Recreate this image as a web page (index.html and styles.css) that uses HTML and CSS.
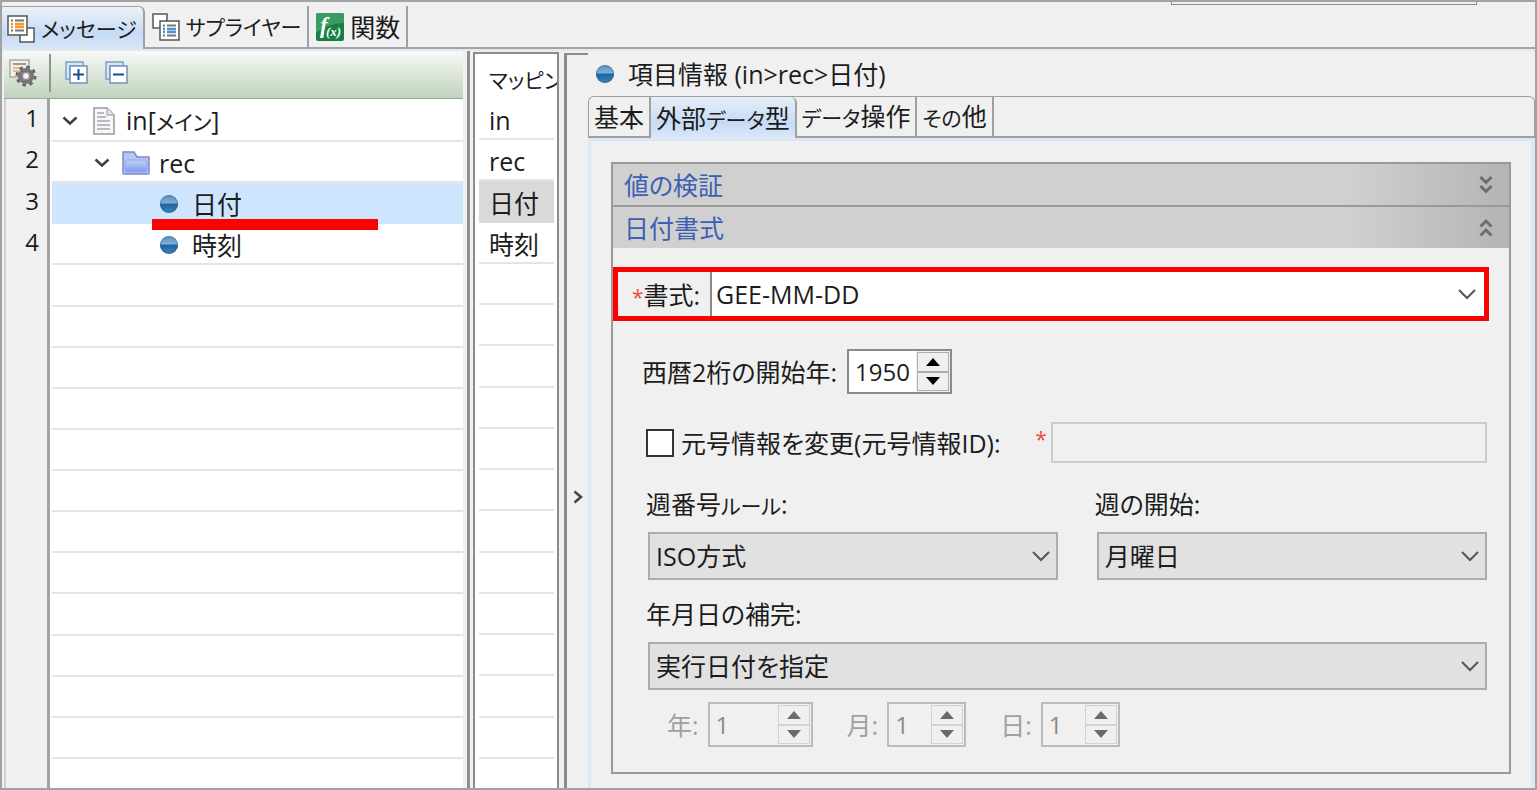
FILE: index.html
```html
<!DOCTYPE html>
<html lang="ja">
<head>
    <meta charset="UTF-8">
    <meta name="viewport" content="width=device-width, initial-scale=1.0">
    <title>項目情報</title>
    <link rel="stylesheet" href="styles.css">
</head>
<body>
    <div class="window">
        <!-- View tabs -->
        <div class="view-tabs">
            <button class="view-tab active">
                <svg width="28" height="28" viewBox="0 0 28 28">
                    <rect x="13" y="13" width="14" height="14" fill="#fff" stroke="#555" stroke-width="1.5"/>
                    <rect x="1" y="1" width="19" height="19" fill="#fff" stroke="#555" stroke-width="1.5"/>
                    <path d="M4 5.500h2M8 5.500h9M4 15.500h2M8 15.500h9" stroke="#777" stroke-width="2"/>
                    <path d="M4 9h2M8 9h9M4 12h2M8 12h9" stroke="#f09a2c" stroke-width="2.500"/>
                </svg>
                <span class="kana">メッセージ</span>
            </button>
            <button class="view-tab">
                <svg width="28" height="28" viewBox="0 0 28 28">
                    <rect x="1" y="1" width="14" height="14" fill="#fff" stroke="#555" stroke-width="1.5"/>
                    <rect x="8" y="8" width="19" height="19" fill="#fff" stroke="#555" stroke-width="1.5"/>
                    <path d="M11 12.500h2M15 12.500h9M11 22.500h2M15 22.500h9" stroke="#777" stroke-width="2"/>
                    <path d="M11 16h2M15 16h9M11 19h2M15 19h9" stroke="#4e93d2" stroke-width="2.500"/>
                </svg>
                <span class="kana">サプライヤー</span>
            </button>
            <button class="view-tab">
                <svg width="28" height="28" viewBox="0 0 28 28">
                    <rect width="28" height="28" rx="2" fill="#158045"/>
                    <path d="M0 2q0-2 2-2h24q2 0 2 2v8Q12 10 0 20z" fill="#3a9c62"/>
                    <text x="4" y="20" class="fx">f</text>
                    <text x="10" y="23" class="fx-arg">(x)</text>
                </svg>
                関数
            </button>
            <span class="search-edge"></span>
        </div>

        <div class="workspace">
            <!-- Message tree -->
            <section class="tree-pane">
                <div class="toolbar">
                    <button class="tool" aria-label="設定">
                        <svg width="28" height="28" viewBox="0 0 28 28">
                            <path d="M1 1h19v17H1z" fill="#f3f0ea" stroke="#aaa" stroke-width="1.500"/>
                            <path d="M4 5h13" stroke="#999" stroke-width="2"/>
                            <path d="M4 9h8M4 12h6" stroke="#e3bd7c" stroke-width="2"/>
                            <circle cx="17" cy="17" r="9" fill="none" stroke="#666" stroke-width="3" stroke-dasharray="3.500 3.568"/>
                            <circle cx="17" cy="17" r="6" fill="#ddd" stroke="#777" stroke-width="4"/>
                            <circle cx="17" cy="17" r="3.500" fill="#f4f4f4" stroke="#777"/>
                        </svg>
                    </button>
                    <span class="tool-line"></span>
                    <button class="tool" aria-label="すべて展開">
                        <svg width="24" height="24" viewBox="0 0 24 24">
                            <path d="M1 18V1h17v4H5v13z" fill="#d9e8f7" stroke="#7f9fc6" stroke-width="1.500"/>
                            <rect x="5" y="5" width="17" height="17" fill="#fff" stroke="#7191bb" stroke-width="1.500"/>
                            <path d="M8 13.500h11M13.500 8v11" stroke="#164f8a" stroke-width="2"/>
                        </svg>
                    </button>
                    <button class="tool" aria-label="すべて折りたたむ">
                        <svg width="24" height="24" viewBox="0 0 24 24">
                            <path d="M1 18V1h17v4H5v13z" fill="#d9e8f7" stroke="#7f9fc6" stroke-width="1.500"/>
                            <rect x="5" y="5" width="17" height="17" fill="#fff" stroke="#7191bb" stroke-width="1.500"/>
                            <path d="M8 13.500h11" stroke="#164f8a" stroke-width="2"/>
                        </svg>
                    </button>
                </div>
                <div class="tree-body">
                    <div class="gutter rows">
                        <div>1</div><div>2</div><div>3</div><div>4</div>
                        <div></div><div></div><div></div><div></div><div></div><div></div>
                        <div></div><div></div><div></div><div></div><div></div><div></div>
                        <div class="rest"></div>
                    </div>
                    <div class="tree rows">
                        <div class="node level-1">
                            <svg class="twisty" width="16" height="10" viewBox="0 0 16 10"><path d="M1.500 1.500L8 7.500l6.500-6" fill="none" stroke="#404040" stroke-width="2.500"/></svg>
                            <svg class="doc" width="22" height="28" viewBox="0 0 22 28">
                                <path d="M1 1h13l7 7v19H1z" fill="#f7f7f9" stroke="#999" stroke-width="1.500"/>
                                <path d="M14 1v7h7" fill="#e4e4e8" stroke="#999"/>
                                <path d="M4 6h7M4 10h9M4 14h13M4 18h13M4 22h13" stroke="#a5a5ad" stroke-width="1.500"/>
                            </svg>
                            <span>in[<span class="kana">メイン</span>]</span>
                        </div>
                        <div class="node level-2">
                            <svg class="twisty" width="16" height="10" viewBox="0 0 16 10"><path d="M1.500 1.500L8 7.500l6.500-6" fill="none" stroke="#404040" stroke-width="2.500"/></svg>
                            <svg class="folder" width="28" height="24" viewBox="0 0 28 24">
                                <defs>
                                    <linearGradient id="folderFill" x1="0" y1="0" x2="0" y2="1">
                                        <stop offset="0" stop-color="#c3d2fa"/>
                                        <stop offset="1" stop-color="#7d9ceb"/>
                                    </linearGradient>
                                </defs>
                                <path d="M1 22V1h11l3 5h12v16q0 1-1 1H2q-1 0-1-1z" fill="#b9c6f5" stroke="#8087c8" stroke-width="1.500"/>
                                <rect x="3" y="9" width="22" height="12" rx="2" fill="url(#folderFill)" stroke="#91a6ea"/>
                            </svg>
                            rec
                        </div>
                        <div class="node level-3 selected"><span class="ball"></span>日付<span class="mark"></span></div>
                        <div class="node level-3"><span class="ball"></span>時刻</div>
                        <div></div><div></div><div></div><div></div><div></div><div></div>
                        <div></div><div></div><div></div><div></div><div></div><div></div>
                        <div class="rest"></div>
                    </div>
                </div>
            </section>

            <!-- Mapping column -->
            <section class="map-pane">
                <div class="map-head"><span class="kana">マッピング</span></div>
                <div class="map rows">
                    <div>in</div>
                    <div>rec</div>
                    <div class="selected">日付</div>
                    <div>時刻</div>
                    <div></div><div></div><div></div><div></div><div></div><div></div>
                    <div></div><div></div><div></div><div></div><div></div><div></div>
                    <div class="rest"></div>
                </div>
            </section>

            <button class="sash" aria-label="開閉">
                <svg width="10" height="14" viewBox="0 0 10 14"><path d="M1.500 1.500L8 7l-6.500 5.500" fill="none" stroke="#444" stroke-width="2.500"/></svg>
            </button>

            <!-- Item details -->
            <section class="detail">
                <h1 class="detail-title"><span class="ball"></span>項目情報 (in&gt;rec&gt;日付)</h1>
                <div class="tabs">
                    <button class="tab">基本</button>
                    <button class="tab active">外部<span class="kana">データ</span>型</button>
                    <button class="tab"><span class="kana">データ</span>操作</button>
                    <button class="tab"><span class="kana">その</span>他</button>
                </div>
                <div class="tab-body">
                    <div class="group">
                        <button class="section">
                            値の検証
                            <svg width="14" height="20" viewBox="0 0 14 20"><path d="M1.500 2L7 7.500 12.500 2M1.500 11L7 16.500l5.500-5.500" fill="none" stroke="#6e6e6e" stroke-width="3"/></svg>
                        </button>
                        <button class="section">
                            日付書式
                            <svg width="14" height="20" viewBox="0 0 14 20"><path d="M1.500 8.500L7 3l5.500 5.500M1.500 17.500L7 12l5.500 5.500" fill="none" stroke="#6e6e6e" stroke-width="3"/></svg>
                        </button>

                        <div class="format-row">
                            <label for="format"><span class="required">*</span>書式:</label>
                            <div class="combo">
                                <select id="format" class="editable"><option>GEE-MM-DD</option></select>
                                <svg width="18" height="11" viewBox="0 0 18 11"><path d="M1 1l8 8 8-8" fill="none" stroke="#555" stroke-width="2"/></svg>
                            </div>
                        </div>

                        <div class="form">
                            <div class="line year-line">
                                <label for="startYear">西暦2桁の開始年:</label>
                                <div class="spinner">
                                    <input type="number" id="startYear" class="w-year" value="1950">
                                    <div class="steps">
                                        <button aria-label="増やす"><svg width="14" height="8" viewBox="0 0 14 8"><path d="M0 8l7-8 7 8z"/></svg></button>
                                        <button aria-label="減らす"><svg width="14" height="8" viewBox="0 0 14 8"><path d="M0 0l7 8 7-8z"/></svg></button>
                                    </div>
                                </div>
                            </div>

                            <div class="line era-line">
                                <input type="checkbox" id="era" class="check">
                                <label for="era">元号情報を変更(元号情報ID):</label>
                                <span class="required era-required">*</span>
                                <input type="text" class="era-id" aria-label="元号情報ID" disabled>
                            </div>

                            <div class="pair">
                                <div>
                                    <label class="caption" for="weekRule">週番号<span class="kana">ルール</span>:</label>
                                    <div class="combo">
                                        <select id="weekRule"><option>ISO方式</option></select>
                                        <svg width="18" height="11" viewBox="0 0 18 11"><path d="M1 1l8 8 8-8" fill="none" stroke="#555" stroke-width="2"/></svg>
                                    </div>
                                </div>
                                <div>
                                    <label class="caption" for="weekStart">週の開始:</label>
                                    <div class="combo">
                                        <select id="weekStart"><option>月曜日</option></select>
                                        <svg width="18" height="11" viewBox="0 0 18 11"><path d="M1 1l8 8 8-8" fill="none" stroke="#555" stroke-width="2"/></svg>
                                    </div>
                                </div>
                            </div>

                            <div class="fill-line">
                                <label class="caption" for="fillRule">年月日の補完:</label>
                                <div class="combo">
                                    <select id="fillRule"><option>実行日付を指定</option></select>
                                    <svg width="18" height="11" viewBox="0 0 18 11"><path d="M1 1l8 8 8-8" fill="none" stroke="#555" stroke-width="2"/></svg>
                                </div>
                            </div>

                            <div class="line date-line">
                                <label for="fillYear">年:</label>
                                <div class="spinner disabled">
                                    <input type="number" id="fillYear" class="w-year" value="1" disabled>
                                    <div class="steps">
                                        <button aria-label="増やす" disabled><svg width="14" height="8" viewBox="0 0 14 8"><path d="M0 8l7-8 7 8z"/></svg></button>
                                        <button aria-label="減らす" disabled><svg width="14" height="8" viewBox="0 0 14 8"><path d="M0 0l7 8 7-8z"/></svg></button>
                                    </div>
                                </div>
                                <label for="fillMonth">月:</label>
                                <div class="spinner disabled">
                                    <input type="number" id="fillMonth" class="w-day" value="1" disabled>
                                    <div class="steps">
                                        <button aria-label="増やす" disabled><svg width="14" height="8" viewBox="0 0 14 8"><path d="M0 8l7-8 7 8z"/></svg></button>
                                        <button aria-label="減らす" disabled><svg width="14" height="8" viewBox="0 0 14 8"><path d="M0 0l7 8 7-8z"/></svg></button>
                                    </div>
                                </div>
                                <label for="fillDay">日:</label>
                                <div class="spinner disabled">
                                    <input type="number" id="fillDay" class="w-day" value="1" disabled>
                                    <div class="steps">
                                        <button aria-label="増やす" disabled><svg width="14" height="8" viewBox="0 0 14 8"><path d="M0 8l7-8 7 8z"/></svg></button>
                                        <button aria-label="減らす" disabled><svg width="14" height="8" viewBox="0 0 14 8"><path d="M0 0l7 8 7-8z"/></svg></button>
                                    </div>
                                </div>
                            </div>
                        </div>
                    </div>
                </div>
            </section>
        </div>
    </div>
</body>
</html>
```
FILE: styles.css
```css
/* Global Styles */
* {
    box-sizing: border-box;
}

body {
    margin: 0;
    background-color: #f0f0f0;
}

body, button, input, select {
    font-family: "Open Sans", "Noto Sans CJK JP", sans-serif;
    font-size: 25px;
    font-feature-settings: "palt";
    line-height: 36px;
    color: #1c1c1c;
}

button {
    padding: 0;
    border: none;
    background: none;
    cursor: pointer;
}

svg {
    display: block;
    flex: none;
}

/* Katakana is set smaller than the kanji beside it */
.kana {
    font-size: 21px;
}

.window {
    display: flex;
    flex-direction: column;
    height: 100vh;
    min-height: 780px;
    border: 2px solid #a2a2a2;
}

/* View tabs */
.view-tabs {
    display: flex;
    height: 47px;
    padding-top: 4px;
    border-bottom: 2px solid #a0a5ad;
}

.view-tab {
    display: flex;
    align-items: center;
    gap: 6px;
    padding: 0 6px 0 7px;
    border-right: 2px solid #a0a0a0;
    white-space: nowrap;
}

.view-tab.active {
    height: 45px;
    padding-left: 5px;
    border-top: 1px solid #a0a0a0;
    border-top-right-radius: 6px;
    background: linear-gradient(#edf2f9, #c5dbf5 60%, #dbe8f8);
}

.fx {
    font: italic bold 23px "Liberation Serif", serif;
    fill: #fff;
}

.fx-arg {
    font: italic bold 13px "Liberation Serif", serif;
    fill: #fff;
}

/* Lower edge of the search box above the tabs */
.search-edge {
    width: 306px;
    height: 3px;
    margin: -4px 58px 0 auto;
    border: 1px solid #8c8c8c;
    border-top: none;
}

/* Workspace */
.workspace {
    display: flex;
    flex: 1;
    min-height: 0;
    border-top: 2px solid #e1e9f1;
}

.tree-pane {
    display: flex;
    flex-direction: column;
    width: 468px;
    padding: 0 4px 0 2px;
    border-right: 3px solid #8f8f8f;
}

.toolbar {
    display: flex;
    align-items: center;
    gap: 16px;
    height: 48px;
    padding: 0 5px 4px;
    border-bottom: 1px solid #9ca79b;
    background: linear-gradient(#f8faf8, #dce6da 50%, #c0d3bd);
}

.tool-line {
    width: 2px;
    height: 38px;
    margin-left: -4px;
    margin-right: -2px;
    background-color: #8d958c;
}

.tree-body {
    display: flex;
    flex: 1;
}

/* Sixteen full rows and the cut-off one below them */
.rows {
    display: flex;
    flex-direction: column;
}

.rows > div {
    display: flex;
    flex: 3 1 0;
    align-items: center;
    padding-top: 3px;
    border-bottom: 2px solid #e4e4e4;
    white-space: nowrap;
}

.rows > .rest {
    flex-grow: 2;
    border-bottom-color: transparent;
}

.gutter {
    width: 46px;
    padding-right: 8px;
    border-right: 3px solid #a3a3a3;
    border-left: 2px solid #d0d0d0;
    font-size: 24px;
}

.gutter.rows > div {
    justify-content: flex-end;
    padding: 1px 0 2px;
    border-bottom-color: transparent;
}

.tree {
    flex: 1;
    padding-left: 2px;
    background-color: #fff;
}

.node {
    position: relative;
}

.level-1 {
    padding-left: 10px;
}

.level-2 {
    padding-left: 42px;
}

.level-3 {
    padding-left: 108px;
}

.twisty {
    margin-right: 15px;
}

.level-2 .twisty {
    margin-right: 12px;
}

.doc {
    margin-right: 11px;
}

.folder {
    margin-right: 9px;
}

.rows > .node.selected {
    border-color: #cde6fe;
    background-color: #cde6fe;
}

.ball {
    flex: none;
    width: 18px;
    height: 18px;
    border-radius: 50%;
    background: linear-gradient(#5f8fba, #7fb0d8 45%, #1f639c 50%, #3d84bd);
    box-shadow: inset 0 0 2px #1d5488;
}

.node .ball {
    margin-right: 14px;
}

.mark {
    position: absolute;
    z-index: 1;
    left: 100px;
    bottom: -8px;
    width: 226px;
    height: 11px;
    background-color: #fe0000;
}

/* Mapping column */
.map-pane {
    display: flex;
    flex-direction: column;
    width: 86px;
    margin: 1px 0 0 3px;
    border: 2px solid #8c8c8c;
    border-bottom: none;
    background-color: #fff;
    overflow: hidden;
}

.map-head {
    width: 82px;
    height: 45px;
    padding: 6px 0 0 14px;
    overflow: hidden;
    white-space: nowrap;
}

.map {
    flex: 1;
    padding: 0 3px 0 4px;
}

.map.rows > div {
    padding-left: 10px;
}

.map.rows > .selected {
    border-color: #d9d9d9;
    background-color: #d9d9d9;
}

.sash {
    display: flex;
    align-items: center;
    justify-content: center;
    width: 24px;
    margin: 2px 0 0 5px;
    padding: 150px 0 0;
    border-left: 3px solid #8c8c8c;
    border-top: 2px solid #8c8c8c;
}

/* Item details */
.detail {
    display: flex;
    flex: 1;
    flex-direction: column;
    min-width: 0;
}

.detail-title {
    display: flex;
    align-items: center;
    gap: 14px;
    height: 46px;
    margin: 0;
    padding: 2px 8px 0;
    font-size: 25px;
    font-weight: normal;
}

.tabs {
    display: flex;
    height: 42px;
    margin-top: 2px;
    border: 1px solid #a0a0a0;
    border-bottom-width: 2px;
    border-radius: 6px 6px 0 0;
}

.tab {
    padding: 1px 5px 0;
    border-right: 2px solid #a0a0a0;
    white-space: nowrap;
}

.tab.active {
    height: 42px;
    border-top-right-radius: 6px;
    background: linear-gradient(#e8eff8, #c5dbf5 60%, #dbe8f8);
}

.tab-body {
    flex: 1;
    padding: 21px 20px 14px;
    border: solid #dce8f3;
    border-width: 3px 4px 0 3px;
}

.group {
    border: 2px solid #999;
}

.section {
    display: flex;
    align-items: center;
    justify-content: space-between;
    width: 100%;
    height: 41px;
    padding: 0 16px 0 11px;
    background: linear-gradient(90deg, #d0d0d0 82%, #b4b4b4);
    color: #3d5fb5;
}

.section + .section {
    height: 43px;
    border-top: 2px solid #999;
}

.format-row {
    display: flex;
    height: 54px;
    margin: 19px 20px 0 0;
    border: 5px solid #fe0000;
}

.format-row label {
    width: 92px;
    padding: 5px 0 0 14px;
    white-space: nowrap;
}

.required {
    font-size: 21px;
    color: #f04848;
}

.format-row .combo {
    flex: 1;
}

/* Drop-downs */
.combo {
    position: relative;
}

.combo select {
    display: block;
    width: 100%;
    height: 48px;
    padding: 0 40px 0 6px;
    border: 2px solid #adadad;
    border-radius: 0;
    background-color: #e1e1e1;
    appearance: none;
}

.combo .editable {
    height: 44px;
    padding-left: 4px;
    border: none;
    border-left: 2px solid #888;
    background-color: #fff;
}

.combo svg {
    position: absolute;
    top: 50%;
    right: 8px;
    margin-top: -5px;
    pointer-events: none;
}

.form {
    padding: 28px 22px 25px 35px;
}

.line {
    display: flex;
    align-items: center;
    white-space: nowrap;
}

.year-line {
    gap: 10px;
    margin-left: -6px;
}

/* Number boxes */
.spinner {
    display: flex;
    height: 45px;
    border: 2px solid #8a8a8a;
    background-color: #fff;
}

.spinner input {
    padding: 0 0 0 6px;
    border: none;
    background: none;
    font-size: 24px;
    appearance: textfield;
}

.spinner input::-webkit-inner-spin-button {
    display: none;
}

.w-year {
    width: 67px;
}

.w-day {
    width: 41px;
}

.steps {
    display: flex;
    flex-direction: column;
    width: 34px;
    padding: 1px;
    background-color: #f0f0f0;
}

.steps button {
    display: flex;
    flex: 1;
    align-items: center;
    justify-content: center;
    border: 1px solid #adadad;
}

.spinner.disabled {
    border-color: #bbb;
    background-color: #f0f0f0;
}

.spinner.disabled input {
    color: #8a8a8a;
}

.spinner.disabled .steps button {
    border-color: #d2d2d2;
}

.spinner.disabled svg {
    fill: #6b6b6b;
}

.era-line {
    height: 41px;
    margin-top: 28px;
}

.check {
    flex: none;
    width: 28px;
    height: 28px;
    margin: 0 7px 0 -2px;
    border: 2px solid #333;
    background-color: #fff;
    appearance: none;
}

.check:checked {
    background-color: #3d5fb5;
}

.era-required {
    margin: 0 4px 8px auto;
}

.era-id {
    width: 52%;
    height: 41px;
    border: 2px solid #ccc;
    background-color: #f0f0f0;
}

.pair {
    display: grid;
    grid-template-columns: 21fr 20fr;
    gap: 39px;
    margin-top: 23px;
}

.caption {
    display: block;
    height: 46px;
    margin-left: -2px;
}

.fill-line {
    margin-top: 16px;
}

.date-line {
    margin: 12px 0 0 19px;
    color: #a0a0a0;
}

.date-line label {
    margin-right: 9px;
}

.date-line .spinner {
    margin-right: 34px;
}
```
